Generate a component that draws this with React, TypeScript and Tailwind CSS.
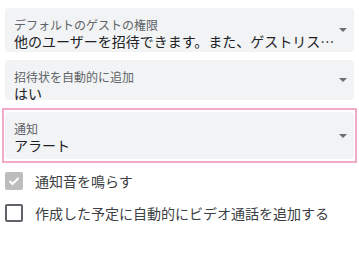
import React from "react";

const FONT = { fontFamily: '"Noto Sans CJK JP", "Noto Sans", sans-serif' };

function Caret() {
  return (
    <svg width="8" height="4" viewBox="0 0 8 4" className="absolute right-[7px] top-1/2 -translate-y-1/2">
      <path d="M0 0 L8 0 L4 4 Z" fill="#6b6e72" />
    </svg>
  );
}

function Field({ label, value, className }: { label: string; value: string; className: string }) {
  return (
    <div className={`relative rounded-[4px] bg-[#f1f3f4] pl-[9px] pr-[16px] ${className}`}>
      <div className="text-[12px] leading-[14px] text-[#5f6368]">{label}</div>
      <div className="truncate text-[14px] leading-[18px] text-[#202124]">{value}</div>
      <Caret />
    </div>
  );
}

export default function App() {
  return (
    <div className="h-[269px] w-[359px] bg-white" style={FONT}>
      <div className="h-[8px]" />
      <Field
        label="デフォルトのゲストの権限"
        value="他のユーザーを招待できます。また、ゲストリストを表示できます"
        className="mx-[5px] h-[44px] pt-[10px]"
      />
      <div className="h-[8px]" />
      <Field label="招待状を自動的に追加" value="はい" className="mx-[5px] h-[40px] pt-[10px]" />
      <div className="h-[8px]" />
      <div className="mx-[2px] border-2 border-[#f2aac9] px-[1px] py-[2px]">
        <Field label="通知" value="アラート" className="h-[47px] pt-[10px]" />
      </div>
      <div className="mt-[9px] flex h-[18px] items-center pl-[5px]">
        <div className="flex h-[18px] w-[18px] items-center justify-center rounded-[2px] bg-[#bdbdbd]">
          <svg width="12" height="10" viewBox="0 0 12 10">
            <path d="M1.5 5 L4.5 8 L10.5 2" stroke="white" strokeWidth="2" fill="none" />
          </svg>
        </div>
        <span className="ml-[12px] text-[14px] leading-[18px] text-[#3c4043]">通知音を鳴らす</span>
      </div>
      <div className="mt-[14px] flex h-[18px] items-center pl-[5px]">
        <div className="h-[18px] w-[18px] rounded-[2px] border-2 border-[#5f6368]" />
        <span className="ml-[12px] text-[14px] leading-[18px] text-[#3c4043]">
          作成した予定に自動的にビデオ通話を追加する
        </span>
      </div>
    </div>
  );
}
